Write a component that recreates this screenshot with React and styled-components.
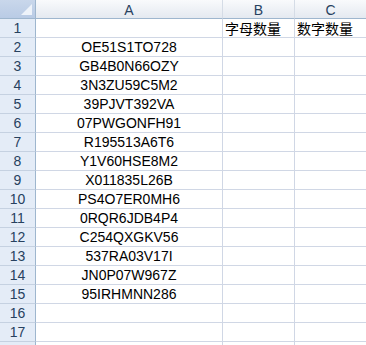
import styled, { createGlobalStyle } from 'styled-components';

const Global = createGlobalStyle`
  html, body {
    margin: 0;
    padding: 0;
    background: #ffffff;
    overflow: hidden;
  }
`;

const Sheet = styled.div`
  display: grid;
  grid-template-columns: 36px 187px 72px 72px;
  grid-auto-rows: 19px;
  width: 367px;
  font-family: "Liberation Sans", "Noto Sans CJK SC", sans-serif;
`;

const Corner = styled.div`
  position: relative;
  box-sizing: border-box;
  background: linear-gradient(#c9d7eb, #b9cbe5);
  border-right: 1px solid #9eb6ce;
  border-bottom: 1px solid #9eb6ce;
`;

const Triangle = styled.svg`
  position: absolute;
  right: 3px;
  bottom: 3px;
`;

const ColHead = styled.div`
  box-sizing: border-box;
  display: flex;
  align-items: center;
  justify-content: center;
  background: linear-gradient(#f9fafc, #e4e9f0);
  border-right: 1px solid #d5dce6;
  border-bottom: 1px solid #9eb6ce;
  color: #27415f;
  font-size: 14px;
  padding-top: 1px;
`;

const RowHead = styled.div`
  box-sizing: border-box;
  display: flex;
  align-items: flex-end;
  justify-content: center;
  background: #e4ecf7;
  border-right: 1px solid #9eb6ce;
  border-bottom: 1px solid #c5d1e1;
  color: #27415f;
  font-size: 14px;
  line-height: 16px;
  padding-bottom: 1px;
`;

const Cell = styled.div`
  box-sizing: border-box;
  display: flex;
  align-items: flex-end;
  justify-content: ${(p) => (p.$center ? 'center' : 'flex-start')};
  padding: 0 2px 1px;
  border-right: 1px solid #d0d7e5;
  border-bottom: 1px solid #d0d7e5;
  color: #000;
  font-size: 14px;
  line-height: 16px;
  white-space: nowrap;
  overflow: hidden;
`;

const CjkText = styled.span`
  font-family: "Noto Sans CJK SC", sans-serif;
  font-size: 14px;
  line-height: 16px;
`;

const codes = [
  'OE51S1TO728',
  'GB4B0N66OZY',
  '3N3ZU59C5M2',
  '39PJVT392VA',
  '07PWGONFH91',
  'R195513A6T6',
  'Y1V60HSE8M2',
  'X011835L26B',
  'PS4O7ER0MH6',
  '0RQR6JDB4P4',
  'C254QXGKV56',
  '537RA03V17I',
  'JN0P07W967Z',
  '95IRHMNN286',
  '',
  '',
];

function Row({ n, code }) {
  return (
    <>
      <RowHead>{n}</RowHead>
      <Cell $center>{code}</Cell>
      <Cell />
      <Cell />
    </>
  );
}

export default function App() {
  return (
    <>
      <Global />
      <Sheet>
        <Corner>
          <Triangle width="11" height="11" viewBox="0 0 11 11">
            <polygon points="11,0 11,11 0,11" fill="#eef3fa" />
          </Triangle>
        </Corner>
        <ColHead>A</ColHead>
        <ColHead>B</ColHead>
        <ColHead>C</ColHead>

        <RowHead>1</RowHead>
        <Cell />
        <Cell><CjkText>字母数量</CjkText></Cell>
        <Cell><CjkText>数字数量</CjkText></Cell>

        {codes.map((code, i) => (
          <Row key={i} n={i + 2} code={code} />
        ))}

        {/* partly visible row below the window edge */}
        <Row n="" code="" />
      </Sheet>
    </>
  );
}
